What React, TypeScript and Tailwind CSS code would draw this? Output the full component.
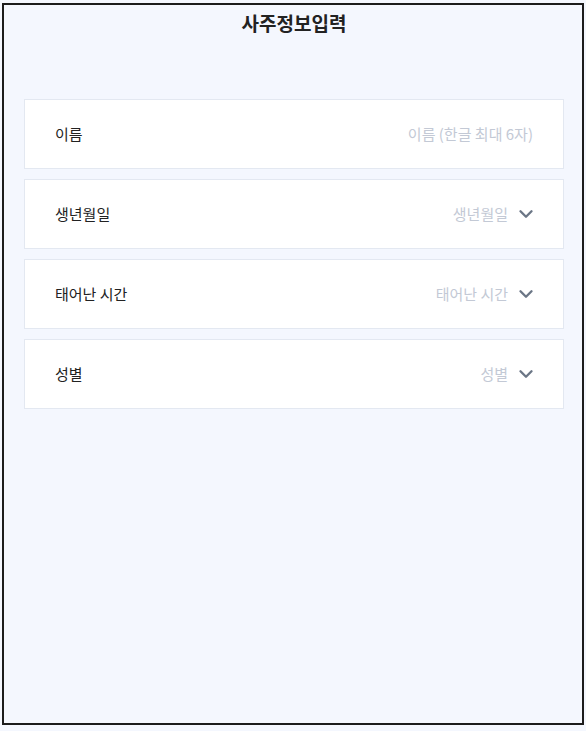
import { ChevronDown } from "lucide-react";

type Field = {
  label: string;
  placeholder: string;
  select?: boolean;
};

const fields: Field[] = [
  { label: "이름", placeholder: "이름 (한글 최대 6자)" },
  { label: "생년월일", placeholder: "생년월일", select: true },
  { label: "태어난 시간", placeholder: "태어난 시간", select: true },
  { label: "성별", placeholder: "성별", select: true },
];

const FieldRow = ({ label, placeholder, select }: Field) => (
  <div
    className={`flex h-[70px] items-center justify-between border border-[#e3e8f1] bg-white pl-[30px] ${
      select ? "pr-[26px]" : "pr-[30px]"
    }`}
  >
    <span className="text-[15px] text-[#222]">{label}</span>
    <div className="flex items-center gap-[7px]">
      <span className="text-[15px] text-[#c3c9d5]">{placeholder}</span>
      {select && (
        <ChevronDown className="h-[22px] w-[22px] text-[#6b7686]" strokeWidth={2.6} />
      )}
    </div>
  </div>
);

export default function App() {
  return (
    <div
      className="min-h-[731px] w-[586px] bg-[#f4f7fe] pl-[2px] pt-[3px]"
      style={{ fontFamily: '"Noto Sans CJK KR", "Noto Sans", sans-serif' }}
    >
      <div className="h-[722px] w-[582px] border-2 border-[#1c1c1c] pl-[20px] pr-[18px]">
        {/* Title */}
        <h1 className="pt-[4px] text-center text-[19px] font-bold leading-[28px] text-[#222]">
          사주정보입력
        </h1>

        {/* Form fields */}
        <div className="mt-[62px] flex flex-col gap-[10px]">
          {fields.map((f) => (
            <FieldRow key={f.label} {...f} />
          ))}
        </div>
      </div>
    </div>
  );
}
